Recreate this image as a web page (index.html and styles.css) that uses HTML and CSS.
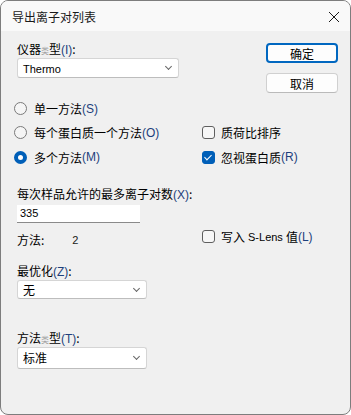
FILE: index.html
```html
<!DOCTYPE html>
<html lang="zh-CN">
<head>
  <meta charset="UTF-8">
  <title>导出离子对列表</title>
  <link rel="stylesheet" href="styles.css">
</head>
<body>
  <div class="window">
    <div class="titlebar">
      <span class="title">导出离子对列表</span>
      <svg class="close" width="12" height="12" viewBox="0 0 12 12">
        <path d="M1 1 L11 11 M11 1 L1 11" stroke="#1a1a1a" stroke-width="1"/>
      </svg>
    </div>

    <div class="content">
      <!-- Instrument type + buttons -->
      <div class="top">
        <div class="field">
          <label class="label">仪器<span class="odd">类</span>型<span class="key">(I)</span>:</label>
          <div class="select wide"><span class="latin">Thermo</span><span class="chev"></span></div>
        </div>
        <div class="buttons">
          <button class="btn default">确定</button>
          <button class="btn">取消</button>
        </div>
      </div>

      <!-- Method options -->
      <div class="options">
        <div class="opt"><span class="radio"></span>单一方法<span class="key">(S)</span></div>
        <div class="opt"></div>
        <div class="opt"><span class="radio"></span>每个蛋白质一个方法<span class="key">(O)</span></div>
        <div class="opt"><span class="check"></span>质荷比排序</div>
        <div class="opt"><span class="radio on"></span>多个方法<span class="key">(M)</span></div>
        <div class="opt"><span class="check on"></span>忽视蛋白质<span class="key">(R)</span></div>
      </div>

      <div class="field count">
        <label class="label">每次样品允许的最多离子对数<span class="key">(X)</span>:</label>
        <div class="textbox latin">335</div>
      </div>

      <div class="methods">
        <div class="methods-count"><span>方法:</span><span class="num latin">2</span></div>
        <div class="opt slens"><span class="check"></span>写入 <span class="latin">S-Lens</span> 值<span class="key">(L)</span></div>
      </div>

      <div class="field optimize">
        <label class="label">最优化<span class="key">(Z)</span>:</label>
        <div class="select">无<span class="chev"></span></div>
      </div>

      <div class="field mtype">
        <label class="label">方法<span class="odd">类</span>型<span class="key">(T)</span>:</label>
        <div class="select tall">标准<span class="chev"></span></div>
      </div>
    </div>
  </div>
</body>
</html>
```

FILE: styles.css
```css
body {
  margin: 0;
  background: #ffffff;
  font-family: "Noto Sans CJK SC", sans-serif;
  font-size: 12px;
  color: #000;
}

.window {
  width: 351px;
  height: 415px;
  box-sizing: border-box;
  border: 1px solid #7d7d7d;
  border-radius: 8px;
  background: #f0f0f0;
  overflow: hidden;
}

.titlebar {
  height: 30px;
  background: #f9f9f9;
  display: flex;
  align-items: center;
  justify-content: space-between;
  padding: 0 10px 0 11px;
}

.title {
  font-size: 12px;
  color: #1a1a1a;
}

.close {
  margin-top: 1px;
}

.content {
  padding: 10px 0 0 16px;
}

.latin {
  font-family: "Liberation Sans", sans-serif;
  font-size: 11px;
}

.label {
  display: block;
  height: 16px;
  line-height: 16px;
}

.odd {
  font-size: 8px;
  color: #a0a0a0;
}

.key {
  font-family: "Liberation Sans", sans-serif;
  font-size: 12px;
  color: #1d3f7c;
}

.top {
  display: flex;
  justify-content: space-between;
  padding-right: 12px;
}

.select {
  position: relative;
  margin-top: 1px;
  width: 130px;
  height: 19px;
  box-sizing: border-box;
  background: #fff;
  border: 1px solid #d5d5d5;
  border-bottom-color: #bdbdbd;
  border-radius: 3px;
  padding-left: 5px;
  line-height: 17px;
}

.select.wide {
  width: 162px;
  height: 20px;
  line-height: 18px;
}

.select.tall {
  height: 22px;
  line-height: 20px;
}

.chev {
  position: absolute;
  right: 7px;
  top: 50%;
  width: 4px;
  height: 4px;
  margin-top: -4px;
  border-right: 1px solid #666;
  border-bottom: 1px solid #666;
  transform: rotate(45deg);
}

.buttons {
  display: flex;
  flex-direction: column;
  gap: 10px;
  padding-top: 2px;
}

.btn {
  width: 72px;
  height: 20px;
  box-sizing: border-box;
  background: #fdfdfd;
  border: 1px solid #d0d0d0;
  border-bottom-color: #bababa;
  border-radius: 4px;
  font-family: "Noto Sans CJK SC", sans-serif;
  font-size: 12px;
  padding: 0;
  color: #000;
}

.btn.default {
  border: 2px solid #0067c0;
}

.options {
  display: grid;
  grid-template-columns: 188px 1fr;
  grid-template-rows: 23px 25px 24px;
  margin: 4px 0 0 -3px;
}

.opt {
  display: flex;
  align-items: center;
}

.radio {
  width: 13px;
  height: 13px;
  box-sizing: border-box;
  border: 1px solid #7a7a7a;
  border-radius: 50%;
  background: #f5f5f5;
  margin-right: 7px;
}

.radio.on {
  border: 4px solid #005fb8;
  background: #fff;
}

.check {
  width: 13px;
  height: 13px;
  box-sizing: border-box;
  border: 1px solid #5f5f5f;
  border-radius: 3px;
  background: #f7f7f7;
  margin-right: 6px;
  position: relative;
}

.check.on {
  background: #005fb8;
  border-color: #005fb8;
}

.check.on::after {
  content: "";
  position: absolute;
  left: 3px;
  top: 1px;
  width: 3px;
  height: 6px;
  border-right: 1px solid #fff;
  border-bottom: 1px solid #fff;
  transform: rotate(45deg);
}

.slens .latin {
  margin: 0 3px 0 3px;
}

.count {
  margin-top: 17px;
}

.textbox {
  margin-top: 3px;
  width: 123px;
  height: 18px;
  box-sizing: border-box;
  background: #fff;
  border-bottom: 1px solid #8a8a8a;
  padding-left: 3px;
  line-height: 17px;
}

.methods {
  display: grid;
  grid-template-columns: 185px 1fr;
  height: 20px;
  margin-top: 2px;
}

.methods-count {
  display: flex;
  align-items: center;
  padding-top: 6px;
}

.num {
  margin-left: 28px;
  color: #1a1a1a;
}

.optimize {
  margin-top: 18px;
}

.mtype {
  margin-top: 31px;
}
```
